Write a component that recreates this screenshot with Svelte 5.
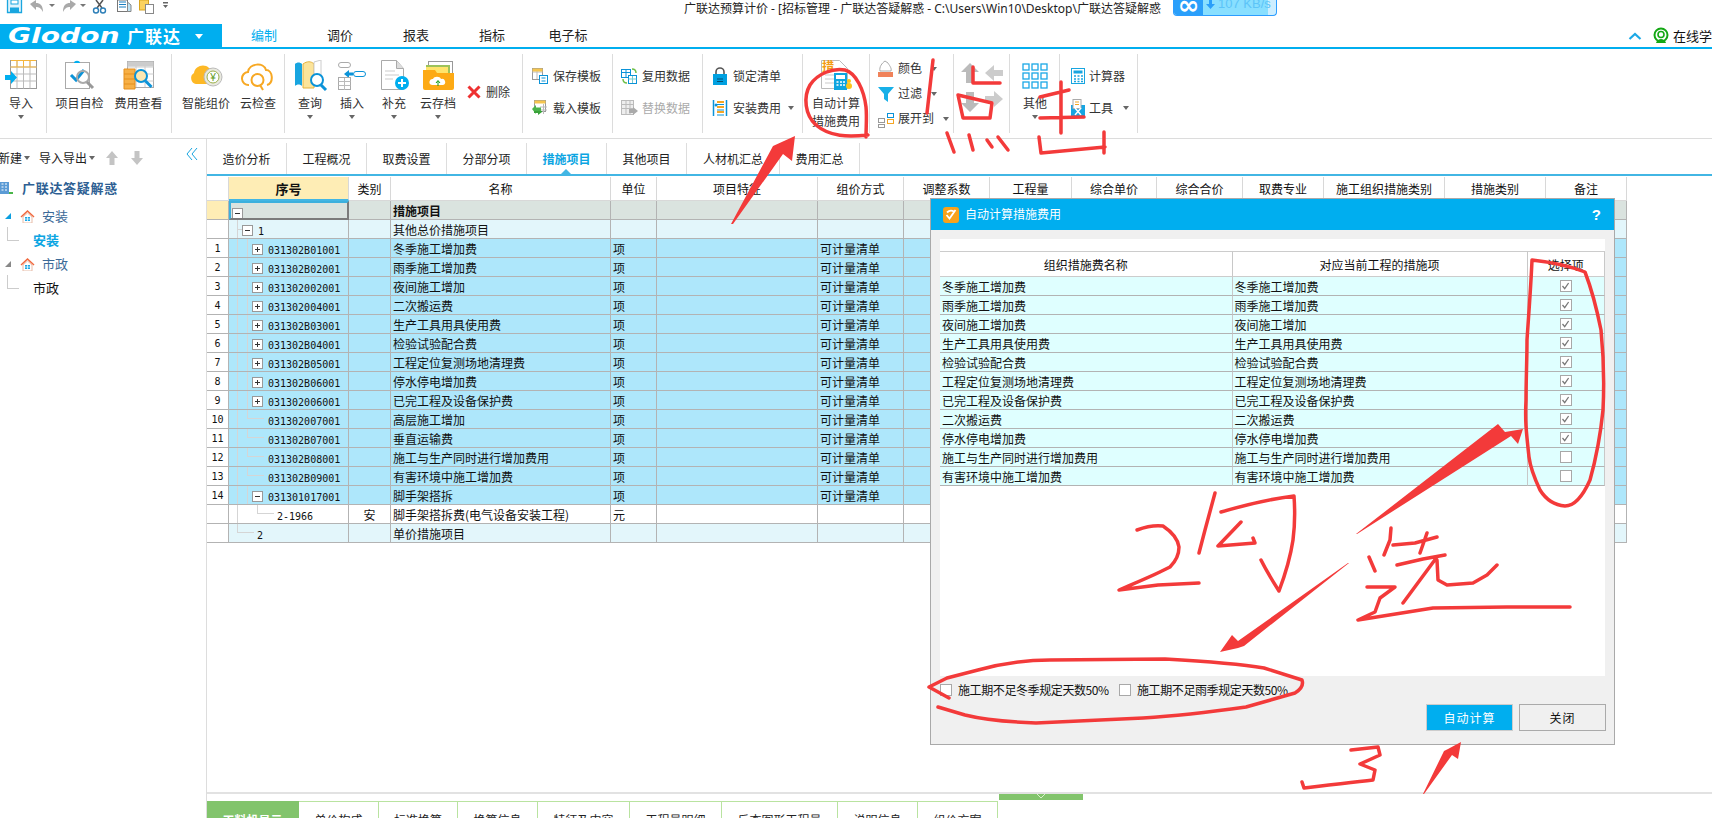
<script>
  const cols = ['序号','类别','名称','单位','项目特征','组价方式','调整系数','工程量','综合单价','综合合价','取费专业','施工组织措施类别','措施类别','备注'];
  const items = [
    ['031302B01001','冬季施工增加费','plus'],['031302B02001','雨季施工增加费','plus'],['031302002001','夜间施工增加','plus'],
    ['031302004001','二次搬运费','plus'],['031302B03001','生产工具用具使用费','plus'],['031302B04001','检验试验配合费','plus'],
    ['031302B05001','工程定位复测场地清理费','plus'],['031302B06001','停水停电增加费','plus'],['031302006001','已完工程及设备保护费','plus'],
    ['031302007001','高层施工增加',''],['031302B07001','垂直运输费',''],['031302B08001','施工与生产同时进行增加费用',''],
    ['031302B09001','有害环境中施工增加费',''],['031301017001','脚手架搭拆','minus']
  ];
  const dlg = [
    ['冬季施工增加费','冬季施工增加费',1],['雨季施工增加费','雨季施工增加费',1],['夜间施工增加费','夜间施工增加',1],
    ['生产工具用具使用费','生产工具用具使用费',1],['检验试验配合费','检验试验配合费',1],['工程定位复测场地清理费','工程定位复测场地清理费',1],
    ['已完工程及设备保护费','已完工程及设备保护费',1],['二次搬运费','二次搬运费',1],['停水停电增加费','停水停电增加费',1],
    ['施工与生产同时进行增加费用','施工与生产同时进行增加费用',0],['有害环境中施工增加费','有害环境中施工增加费',0]
  ];
  const topTabs = ['编制','调价','报表','指标','电子标'];
  const subTabs = ['造价分析','工程概况','取费设置','分部分项','措施项目','其他项目','人材机汇总','费用汇总'];
  const botTabs = ['工料机显示','单价构成','标准换算','换算信息','特征及内容','工程量明细','反查图形工程量','说明信息','组价方案'];
</script>

{#snippet caret()}<span class="caret"></span>{/snippet}
{#snippet box(kind)}<span class="box"><i></i>{#if kind === 'plus'}<b></b>{/if}</span>{/snippet}
{#snippet check(on)}<span class="cb">{#if on}<svg width="11" height="12" viewBox="0 0 11 12"><path d="M2.5 6l2.2 2.6L8.6 3" fill="none" stroke="#777" stroke-width="1.3"/></svg>{/if}</span>{/snippet}

<div class="app">
  <header class="title">
    <div class="quick">
      <svg width="170" height="14" viewBox="0 0 170 14">
        <path d="M7.500 0v12.500h14V0" fill="#dff3fc" stroke="#1aa6df" stroke-width="1.300"/><rect x="10" y="7.500" width="9" height="5" fill="#1aa6df"/><rect x="11" y="0" width="7" height="4" fill="#fff" stroke="#1aa6df"/>
        <path d="M30 4l6-4v3c4 0 7 2 7 9-2-4-4-5-7-5v3z" fill="#a9a9a9"/><path d="M49 4h6l-3 3z" fill="#777"/>
        <path d="M76 4l-6-4v3c-4 0-7 2-7 9 2-4 4-5 7-5v3z" fill="#a9a9a9"/><path d="M80 4h6l-3 3z" fill="#777"/>
        <path d="M96 0l6 8M103 0l-6 8" stroke="#555" stroke-width="1.500"/><circle cx="96" cy="10.500" r="2.500" fill="none" stroke="#2d7fb8" stroke-width="1.400"/><circle cx="103" cy="10.500" r="2.500" fill="none" stroke="#2d7fb8" stroke-width="1.400"/>
        <rect x="117.500" y="0" width="10" height="11.500" fill="#fff" stroke="#777"/><path d="M119 2h7M119 4.500h7M119 7h7" stroke="#1a7fc0"/><path d="M127.500 2l3.500 3v6.500h-3.500z" fill="#bfe4f5" stroke="#888"/>
        <rect x="139.500" y="0" width="9" height="10" fill="#fbd25f" stroke="#d9a520"/><rect x="145.500" y="4.500" width="8" height="9" fill="#fff" stroke="#888"/>
        <path d="M163 2h5v1.500h-5zM163 5h5l-2.500 3z" fill="#666"/>
      </svg>
    </div>
    <div class="wintitle">广联达预算计价 - [招标管理 - 广联达答疑解惑 - C:\Users\Win10\Desktop\广联达答疑解惑</div>
    <div class="speed">
      <span class="inf">∞</span>
      <span class="rate"><svg width="9" height="9" viewBox="0 0 9 9"><path d="M3 0h3v4h3L4.500 9 0 4h3z" fill="#2a9ffa"/></svg>107 KB/s</span>
    </div>
  </header>

  <nav class="tabbar">
    <div class="logo"><span class="gl">Glodon</span><span class="cn">广联达</span><span class="lcaret"></span></div>
    {#each topTabs as t, i}
      <div class="ttab" class:on={i === 0}>{t}</div>
    {/each}
    <div class="tright">
      <svg width="14" height="8" viewBox="0 0 14 8"><path d="M1.500 7L7 2l5.500 5" fill="none" stroke="#1ba8e6" stroke-width="2.200"/></svg>
      <svg class="agent" width="18" height="18" viewBox="0 0 18 18"><circle cx="9" cy="8" r="6.500" fill="none" stroke="#14a814" stroke-width="2"/><circle cx="9" cy="7.500" r="3" fill="none" stroke="#14a814" stroke-width="1.600"/><path d="M4 16c1-3 3-4 5-4s4 1 5 4z" fill="#14a814"/></svg>
      <span>在线学</span>
    </div>
  </nav>

  <section class="ribbon">
    <div class="grp g1">
      <div class="lg"><svg width="36" height="32" viewBox="0 0 36 32">
        <rect x="7.500" y="0.500" width="26" height="28" fill="#fff" stroke="#999"/>
        <path d="M7.500 7h26M7.500 14h26M7.500 21h26M14 .5v28M20.500 .5v28M27 .5v28" stroke="#bbb"/><path d="M7.500 7h26M14 .5v6.500M20.500 .5v6.500M27 .5v6.500M8 .5h25" stroke="#f5b53c" fill="none"/>
        <path d="M2 15h6v-4l6 6.500-6 6.500v-4H2z" fill="#00aeef"/></svg>
        <span class="lb">导入</span>{@render caret()}</div>
    </div>
    <div class="grp g2">
      <div class="lg"><svg width="36" height="32" viewBox="0 0 36 32">
        <rect x="3.500" y="2.500" width="24" height="26" fill="#fff" stroke="#aaa"/><path d="M12 3c0-3 6-3 6 0z" fill="#00aeef"/>
        <path d="M9 15l5 5 8-10" fill="none" stroke="#0b93d8" stroke-width="3"/><circle cx="21" cy="17" r="6" fill="none" stroke="#aaa" stroke-width="2"/><path d="M25 22l6 6" stroke="#999" stroke-width="3"/></svg>
        <span class="lb">项目自检</span></div>
      <div class="lg"><svg width="36" height="32" viewBox="0 0 36 32">
        <rect x="6.500" y="1.500" width="26" height="26" fill="#fff" stroke="#aaa"/><path d="M6.500 7h26M6.500 14h26M6.500 21h26M15 2v25M24 2v25" stroke="#ccc"/><rect x="6.500" y="1.500" width="26" height="5" fill="#ccc"/>
        <path d="M3 9h11v20H3z" fill="#f7b046" stroke="#e58f1d"/><path d="M3 14h11M3 19h11M3 24h11" stroke="#e58f1d"/>
        <circle cx="20" cy="16" r="6" fill="#fce8b2" stroke="#0b93d8" stroke-width="2"/><path d="M24.500 21l6 6" stroke="#0b93d8" stroke-width="3"/></svg>
        <span class="lb">费用查看</span></div>
    </div>
    <div class="grp g3">
      <div class="lg"><svg width="36" height="32" viewBox="0 0 36 32">
        <path d="M8 24a6 6 0 0 1-2-11c1-7 10-10 15-5 3 0 4 1 5 3v13z" fill="#fdb825"/>
        <circle cx="25" cy="17" r="9" fill="#e9e9df" stroke="#bbb"/><circle cx="25" cy="17" r="6" fill="#fff" stroke="#9ab04a"/><text x="25" y="21" text-anchor="middle" font-size="10" fill="#5c9a1a" font-family="Liberation Sans">¥</text></svg>
        <span class="lb">智能组价</span></div>
      <div class="lg"><svg width="36" height="32" viewBox="0 0 36 32">
        <path d="M9 25a6.500 6.500 0 0 1-1-13C9 3 24 2 26 10c7 0 8 13 1 15" fill="none" stroke="#f7a823" stroke-width="2"/>
        <circle cx="17.500" cy="20" r="6" fill="none" stroke="#f7a823" stroke-width="2"/><path d="M20 25l3 5" stroke="#f7a823" stroke-width="2"/></svg>
        <span class="lb">云检查</span></div>
    </div>
    <div class="grp g4">
      <div class="lg"><svg width="36" height="32" viewBox="0 0 36 32">
        <path d="M3 4c2-2 5-2 7 0v22c-2-2-5-2-7 0z" fill="#18a5e0"/><path d="M11 4c4-3 8-3 11 0v24H11z" fill="#fce49a" stroke="#e6b33d"/><path d="M22 2l7-2v20l-7 6z" fill="#fff" stroke="#ccc"/>
        <circle cx="25" cy="20" r="6" fill="#fff" stroke="#0b93d8" stroke-width="2"/><path d="M29 25l5 5" stroke="#0b93d8" stroke-width="3"/></svg>
        <span class="lb">查询</span>{@render caret()}</div>
      <div class="lg"><svg width="36" height="32" viewBox="0 0 36 32">
        <rect x="4.500" y="2.500" width="12" height="5" rx="2.500" fill="#fff" stroke="#aaa"/><rect x="19.500" y="11.500" width="12" height="5" rx="2.500" fill="#fff" stroke="#0b93d8"/>
        <path d="M10 14l5-4v2.500h4v3h-4V18z" fill="#0b93d8"/><rect x="4.500" y="17.500" width="12" height="12" fill="#fff" stroke="#aaa"/><path d="M4.500 21.500h12M4.500 25.500h12M10.500 18v12" stroke="#bbb"/></svg>
        <span class="lb">插入</span>{@render caret()}</div>
      <div class="lg"><svg width="36" height="32" viewBox="0 0 36 32">
        <path d="M5.500 .5h15l7 8v21h-22z" fill="#fff" stroke="#aaa"/><path d="M20.500 .5v8h7" fill="#ddd" stroke="#aaa"/><path d="M9 11h10M9 15h14M9 19h8" stroke="#ddd" stroke-width="1.500"/>
        <circle cx="26" cy="23" r="7" fill="#00aeef"/><path d="M26 19v8M22 23h8" stroke="#fff" stroke-width="2"/></svg>
        <span class="lb">补充</span>{@render caret()}</div>
      <div class="lg wide"><svg width="36" height="32" viewBox="0 0 36 32">
        <rect x="8.500" y="1.500" width="24" height="18" fill="#fff" stroke="#999"/><rect x="6" y="5" width="24" height="16" fill="#9cc25a"/><rect x="6" y="7" width="22" height="14" fill="#ffe46b"/>
        <path d="M3 10h12l2 3h17v15a2 2 0 0 1-2 2H5a2 2 0 0 1-2-2z" fill="#fdaa15"/><path d="M12 25a3 3 0 0 1 1-6c1-3 7-3 8 0a3 3 0 0 1 2 6z" fill="#fff"/><path d="M18 26v-5M16 23l2-2.500 2 2.500" fill="none" stroke="#149c14"/></svg>
        <span class="lb">云存档</span>{@render caret()}</div>
      <div class="sm del"><svg width="14" height="14" viewBox="0 0 14 14"><path d="M1.500 1.500l11 11M12.500 1.500l-11 11" stroke="#ee3131" stroke-width="3"/></svg><span>删除</span></div>
    </div>
    <div class="grp g5 stack">
      <div class="sm"><svg width="18" height="18" viewBox="0 0 18 18"><rect x="1.500" y="1.500" width="10" height="11" fill="#fff" stroke="#999"/><path d="M1.500 5h10M6 2v10" stroke="#bbb"/><rect x="1.500" y="1.500" width="10" height="3" fill="#f5c54f"/><rect x="8.500" y="8.500" width="8" height="8" fill="#fff" stroke="#0b93d8"/><path d="M10.500 11h4M10.500 14h4" stroke="#0b93d8"/></svg><span>保存模板</span></div>
      <div class="sm"><svg width="18" height="18" viewBox="0 0 18 18"><rect x="3.500" y="1.500" width="11" height="11" fill="#fff" stroke="#999"/><rect x="3.500" y="1.500" width="11" height="3" fill="#f5c54f"/><path d="M9 8h7M9 11h7M12.500 5v10" stroke="#bbb"/><path d="M1 10l4-4v2.500h5v4H5V15z" fill="#4bb34b"/><path d="M11 13l-4 3v-2H3v-2h8z" fill="#3aa23a"/></svg><span>载入模板</span></div>
    </div>
    <div class="grp g6 stack">
      <div class="sm"><svg width="18" height="18" viewBox="0 0 18 18"><rect x="1.500" y="2.500" width="9" height="8" fill="#fff" stroke="#0b93d8"/><path d="M1.500 5.500h9M6 3v7" stroke="#0b93d8"/><rect x="8.500" y="8.500" width="8" height="8" fill="#fff" stroke="#0b93d8"/><path d="M8.500 12h8M12.500 9v7" stroke="#7cc"/><path d="M12 2c3 0 4 1 4 4M3 12c0 3 1 4 4 4" fill="none" stroke="#6fbf4a" stroke-width="1.500"/></svg><span>复用数据</span></div>
      <div class="sm off"><svg width="18" height="18" viewBox="0 0 18 18"><rect x="1.500" y="1.500" width="12" height="14" fill="#eee" stroke="#bbb"/><path d="M1.500 5.500h12M1.500 9.500h12M6 2v13M10 2v13" stroke="#bbb"/><path d="M9 10h4V8l5 4-5 4v-2H9z" fill="#aaa"/></svg><span>替换数据</span></div>
    </div>
    <div class="grp g7 stack">
      <div class="sm"><svg width="16" height="18" viewBox="0 0 16 18"><path d="M4 8V5a4 4 0 0 1 8 0v3" fill="none" stroke="#555" stroke-width="1.600"/><rect x="1" y="7" width="14" height="11" fill="#00a0e0"/><path d="M5 12h6M5 14.500h6" stroke="#044f74"/></svg><span>锁定清单</span></div>
      <div class="sm"><svg width="16" height="18" viewBox="0 0 16 18"><path d="M1.500 1v16M14.500 1v16" stroke="#0b93d8" stroke-width="1.500"/><path d="M5 3h7M5 8h7M5 13h7" stroke="#f5a623" stroke-width="2"/><circle cx="4" cy="6" r="1.500" fill="#0b93d8"/><path d="M5 5.500h7M5 11h7M5 16h7" stroke="#0b93d8"/></svg><span>安装费用</span>{@render caret()}</div>
    </div>
    <div class="grp g8">
      <div class="lg"><svg width="36" height="32" viewBox="0 0 36 32">
        <path d="M3.500 .5h18l8 8v20h-26z" fill="#fff" stroke="#bbb"/><path d="M7 15h12M7 19h12M7 23h12" stroke="#ddd" stroke-width="1.500"/>
        <text x="4" y="11" font-size="12" font-weight="700" fill="#f39c12" font-family="Noto Sans CJK SC">措</text>
        <rect x="16" y="13" width="13" height="17" fill="#0ea5e0"/><rect x="18" y="15" width="9" height="4" fill="#fff"/><path d="M18.500 22h2M22 22h2M25 22h2M18.500 25h2M22 25h2M25 25h2" stroke="#fff" stroke-width="1.600"/>
        <circle cx="31" cy="26" r="3" fill="#fcc419"/><circle cx="31" cy="21" r="2" fill="#fcc419"/></svg>
        <span class="lb two">自动计算<br/>措施费用</span></div>
    </div>
    <div class="grp g9 stack">
      <div class="sm"><svg width="18" height="18" viewBox="0 0 18 18"><path d="M8 1c-3 2-6 6-5 10h11c1-3-2-6-3-8z" fill="#fff" stroke="#aaa"/><rect x="1" y="12" width="15" height="5" fill="#f0825a"/></svg><span>颜色</span>{@render caret()}</div>
      <div class="sm"><svg width="18" height="18" viewBox="0 0 18 18"><path d="M1 2h16l-6 7v8l-4-3V9z" fill="#18b0e8"/></svg><span>过滤</span>{@render caret()}</div>
      <div class="sm"><svg width="18" height="18" viewBox="0 0 18 18"><rect x="1.500" y="8.500" width="6" height="4" fill="#fff" stroke="#999"/><rect x="10.500" y="3.500" width="6" height="4" fill="#fff" stroke="#0b93d8"/><rect x="10.500" y="9.500" width="6" height="4" fill="#fff" stroke="#f5a623"/><rect x="1.500" y="14.500" width="6" height="3" fill="#fff" stroke="#999"/></svg><span>展开到</span>{@render caret()}</div>
    </div>
    <div class="grp g10">
      <svg width="44" height="60" viewBox="0 0 44 60"><path d="M9 1L0 10h5v11h8V10h5z" fill="#bbb"/><path d="M24 11l9-8v5h9v6h-9v5z" fill="#ccc"/><path d="M9 50L0 41h5V30h8v11h5z" fill="#bbb"/><path d="M42 37l-9-8v5h-9v6h9v5z" fill="#ccc"/></svg>
    </div>
    <div class="grp g11">
      <div class="lg"><svg class="nine" width="26" height="26" viewBox="0 0 26 26"><g fill="#fff" stroke="#1ba8e6" stroke-width="1.300"><rect x="1" y="1" width="6" height="6"/><rect x="10" y="1" width="6" height="6"/><rect x="19" y="1" width="6" height="6"/><rect x="1" y="10" width="6" height="6"/><rect x="10" y="10" width="6" height="6"/><rect x="19" y="10" width="6" height="6"/><rect x="1" y="19" width="6" height="6"/><rect x="10" y="19" width="6" height="6"/><rect x="19" y="19" width="6" height="6"/></g></svg>
        <span class="lb">其他</span>{@render caret()}</div>
    </div>
    <div class="grp g12 stack">
      <div class="sm"><svg width="14" height="18" viewBox="0 0 14 18"><rect x=".5" y="1.500" width="13" height="15" fill="#fff" stroke="#18a5e0"/><rect x="2.500" y="3.500" width="9" height="3" fill="#18a5e0"/><path d="M3 9h2M6.500 9h2M10 9h2M3 12h2M6.500 12h2M10 12h2M3 14.500h2M6.500 14.500h2M10 14.500h2" stroke="#18a5e0" stroke-width="1.300"/></svg><span>计算器</span></div>
      <div class="sm"><svg width="14" height="18" viewBox="0 0 14 18"><rect y="6" width="14" height="12" fill="#17a5e2"/><rect x="2" y="0.500" width="8" height="9" fill="#fff" stroke="#aaa"/><path d="M4 3h4M4 5.500h4" stroke="#f5a623"/><path d="M4 9l6 7M10 9l-6 7" stroke="#fff" stroke-width="1.500"/></svg><span>工具</span>{@render caret()}</div>
    </div>
  </section>

  <div class="body">
    <aside class="side">
      <div class="sidebar-tools">
        <span class="nw">新建</span>{@render caret()}<span class="ie">导入导出</span>{@render caret()}
        <svg class="arrows" width="40" height="14" viewBox="0 0 40 14"><path d="M6 0L0 7h3.500v7h5V7H12zM31 14l-6-7h3.500V0h5v7H37z" fill="#c4c4c4"/></svg>
        <svg class="coll" width="12" height="14" viewBox="0 0 12 14"><path d="M6 1L1 7l5 6M11 1L6 7l5 6" fill="none" stroke="#18a5e0"/></svg>
      </div>
      <div class="root">
        <svg width="14" height="14" viewBox="0 0 14 14"><path d="M1 13V1h9v12z" fill="#5b9bd5"/><path d="M2.500 3h2M6 3h2M2.500 6h2M6 6h2M2.500 9h2M6 9h2" stroke="#fff"/><rect x="10" y="11" width="4" height="2" fill="#49b649"/></svg>
        <span>广联达答疑解惑</span>
      </div>
      {#each [['安装', true], ['市政', false]] as [n, sel]}
        <div class="node"><span class="tri" class:sel></span>
          <svg width="15" height="14" viewBox="0 0 15 14"><path d="M7.500 1L0.500 7.500l1 1L7.500 3l6 5.500 1-1z" fill="#f0683e"/><path d="M3 8l4.500-4L12 8v6H3z" fill="#fff" stroke="#e7bca8"/><rect x="5" y="8" width="5" height="4" fill="#1ba8e6"/><path d="M7.500 8v4M5 10h5" stroke="#fff" stroke-width=".7"/></svg>
          <span>{n}</span></div>
        <div class="leaf" class:sel>{n}</div>
      {/each}
    </aside>
    <main class="main">
      <div class="subtabs">
        {#each subTabs as t, i}
          <div class="stab" class:on={i === 4} class:w93={i === 6}>{t}</div>
        {/each}
      </div>
      <div class="grid">
        <div class="row head">
          <div class="c idx"></div>
          {#each cols as c, i}<div class="c" class:seq={i === 0}>{c}</div>{/each}
        </div>
        <div class="row r0">
          <div class="c idx"></div>
          <div class="c sel0 lv0">{@render box('minus')}</div>
          <div class="c"></div><div class="c nm bold">措施项目</div>
          {#each Array(11).fill(0) as _}<div class="c"></div>{/each}
        </div>
        <div class="row r1">
          <div class="c idx"></div>
          <div class="c lv1 tl">{@render box('minus')}<span class="code">1</span></div>
          <div class="c"></div><div class="c nm">其他总价措施项目</div>
          {#each Array(11).fill(0) as _}<div class="c"></div>{/each}
        </div>
        {#each items as it, i}
          <div class="row item">
            <div class="c idx num">{i + 1}</div>
            <div class="c lv2 tl tl2" class:tree={!it[2]}>
              {#if it[2]}{@render box(it[2])}{/if}<span class="code">{it[0]}</span>
            </div>
            <div class="c"></div>
            <div class="c nm">{it[1]}</div>
            <div class="c nm">项</div>
            <div class="c"></div>
            <div class="c nm">可计量清单</div>
            {#each Array(8).fill(0) as _}<div class="c"></div>{/each}
          </div>
        {/each}
        <div class="row plain">
          <div class="c idx"></div>
          <div class="c lv3 tl3 tl"><span class="code">2-1966</span></div>
          <div class="c mid">安</div>
          <div class="c nm">脚手架搭拆费(电气设备安装工程)</div>
          <div class="c nm">元</div>
          {#each Array(10).fill(0) as _}<div class="c"></div>{/each}
        </div>
        <div class="row r1">
          <div class="c idx"></div>
          <div class="c lv1b tl4"><span class="code">2</span></div>
          <div class="c"></div><div class="c nm">单价措施项目</div>
          {#each Array(11).fill(0) as _}<div class="c"></div>{/each}
        </div>
      </div>
      <div class="spacer"></div>
      <div class="botline"><div class="handle"><svg width="10" height="6" viewBox="0 0 10 6"><path d="M1 0l4 4 4-4" fill="none" stroke="#d9f0cc"/></svg></div></div>
      <div class="bottabs">
        {#each botTabs as t, i}<div class="btab b{i}" class:on={i === 0}>{t}</div>{/each}
      </div>
    </main>
  </div>

  <div class="dialog">
    <div class="dhead">
      <svg width="16" height="16" viewBox="0 0 16 16"><rect width="16" height="16" rx="3" fill="#f7a21b"/><path d="M3.500 8l3 3.500L12.500 3M4 5.500c2-2 5-2 7-1" fill="none" stroke="#fff" stroke-width="1.800"/></svg>
      <span class="dtitle">自动计算措施费用</span>
      <b class="q">?</b>
    </div>
    <div class="panel">
      <div class="drow dh"><div class="dc">组织措施费名称</div><div class="dc">对应当前工程的措施项</div><div class="dc">选择项</div></div>
      {#each dlg as d}
        <div class="drow dd"><div class="dc">{d[0]}</div><div class="dc">{d[1]}</div><div class="dc ctr">{@render check(d[2])}</div></div>
      {/each}
    </div>
    <div class="opts">
      {@render check(0)}<span class="o1">施工期不足冬季规定天数50%</span>
      {@render check(0)}<span class="o2">施工期不足雨季规定天数50%</span>
    </div>
    <div class="btns">
      <div class="btn pri">自动计算</div><div class="btn">关闭</div>
    </div>
  </div>

  <svg class="ink" width="1712" height="818" viewBox="0 0 1712 818">
    <g fill="none" stroke="#f33a3a" stroke-width="3.500" stroke-linecap="round" stroke-linejoin="round">
      <path d="M868 135C848 137 830 137 816 125C805 115 803 97 810 85C818 73 833 68 845 70C856 73 864 90 866 107C867 117 866 128 866 137"/>
      <path d="M933 60L927 113"/>
      <path d="M973 67V83H1000M958 95L963 118H990L992 103L958 95M947 133L954 152M969 135L973 150M987 140L992 147M998 137L1008 150"/>
      <path d="M1040 97L1069 90M1061 82V133M1040 118L1084 117M1039 137L1041 153L1105 147M1104 132V153"/>
      <path d="M1532 260C1550 262 1570 266 1585 272C1590 285 1597 310 1601 330C1604 360 1604 390 1603 410C1601 430 1597 455 1590 480C1582 498 1574 506 1565 506C1552 505 1545 498 1540 490C1533 475 1530 465 1529 457C1526 430 1525 420 1526 400C1526 380 1527 360 1527 340C1529 310 1531 285 1532 260"/>
      <path d="M1137 530C1145 527 1155 525 1163 526C1172 532 1178 540 1179 547C1179 555 1175 562 1170 567C1155 575 1135 583 1119 590L1158 585L1199 583"/>
      <path d="M1215 493L1205 530L1199 553M1221 512C1245 505 1270 499 1294 496C1295 510 1295 525 1293 540C1290 560 1285 575 1279 591C1272 580 1266 570 1261 560M1241 522L1218 546L1255 543L1253 538"/>
      <path d="M1391 528L1390 540L1384 555M1393 545L1415 543L1437 537M1427 533L1420 553M1397 565L1423 559L1445 555M1437 557L1403 603M1437 560L1438 580L1447 585L1473 583L1487 575L1497 565M1369 557L1375 571M1367 587L1395 587L1380 598L1375 612L1358 620L1433 608L1507 607L1570 607"/>
      <path d="M949 698L929 687L947 678L978 670C1000 664 1025 660 1050 660L1165 659C1200 661 1240 664 1264 668L1302 680C1304 686 1300 690 1295 693L1246 707C1210 712 1175 716 1143 718L1036 723C1010 722 985 720 965 715L938 707"/>
      <path d="M1351 750L1378 747L1380 755L1360 764L1375 770L1373 780C1350 783 1325 785 1304 788L1302 782"/>
    </g>
    <g fill="#f33a3a">
      <polygon points="795,136 792,161 783,154 733,224 731,224 773,146"/>
      <polygon points="1523,429 1518,444 1511,436 1357,534 1356,534 1498,424 1505,432"/>
      <polygon points="1220,652 1232,635 1238,641 1348,563 1349,563 1244,646 1238,648"/>
      <polygon points="1461,742 1458,759 1452,755 1424,794 1423,794 1444,751 1448,749"/>
    </g>
  </svg>
</div>

<style>
  :global(body){margin:0;overflow:hidden;background:#fff}
  .app{position:relative;width:1712px;height:818px;overflow:hidden;display:flex;flex-direction:column;background:#fff;
    font:12px/1.2 "Noto Sans CJK SC","Liberation Sans",sans-serif;color:#222}
  .title{height:24px;flex:none;display:flex;position:relative;overflow:hidden}
  .quick{width:684px;flex:none;height:14px}
  .wintitle{white-space:nowrap;font-size:12px;line-height:17px;color:#222;font-family:"Noto Sans","Noto Sans CJK SC",sans-serif}
  .speed{position:absolute;left:1173px;top:0;width:104px;height:16px;display:flex;border:1px solid #2c9dff;border-top:0;border-radius:0 0 4px 4px;box-sizing:border-box;overflow:hidden;background:#cdeeff}
  .inf{width:29px;flex:none;background:#2a9ffa;color:#fff;font:bold 26px/10px "DejaVu Sans",sans-serif;text-align:center}
  .rate{width:65px;flex:none;background:#88dfff;color:#5cc4f8;font:13px/7px "Liberation Sans",sans-serif;padding-left:3px;box-sizing:border-box;white-space:nowrap;display:flex;gap:3px;align-items:flex-start}
  .rate svg{flex:none}

  .tabbar{height:25px;flex:none;display:flex;box-sizing:border-box;border-bottom:2px solid #00aeef}
  .logo{width:222px;flex:none;margin-right:4px;background:#00aeef;color:#fff;display:flex;align-items:center;padding-left:8px;box-sizing:border-box;height:23px;position:relative}
  .gl{display:inline-block;font:italic bold 22px/23px "DejaVu Sans",sans-serif;width:119px;flex:none;transform:scaleX(1.28);transform-origin:left center}
  .cn{font:bold 17px/23px "Noto Sans CJK SC",sans-serif;letter-spacing:1px;flex:none}
  .lcaret{margin-left:14px;border:4px solid transparent;border-top:5px solid #fff;margin-top:5px}
  .ttab{width:76px;text-align:center;font-size:13px;line-height:22px;color:#222;box-sizing:border-box;height:23px}
  .ttab.on{color:#00aeef;border-bottom:2px solid #00aeef;height:25px}
  .tright{margin-left:auto;display:flex;align-items:center;font-size:13px;color:#111;white-space:nowrap;width:84px;height:23px}
  .tright svg:first-child{margin-right:10px;flex:none}
  .agent{margin-right:3px;flex:none}

  .ribbon{height:90px;flex:none;display:flex;box-sizing:border-box;border-bottom:1px solid #dcdcdc;padding-top:5px}
  .grp{height:79px;box-sizing:border-box;border-right:1px solid #dcdcdc;display:flex;padding-top:6px;flex:none}
  .g1{width:47px}.g2{width:125px;padding-left:3px}.g3{width:113px;padding-left:8px}.g4{width:238px;padding-left:4px}
  .g5{width:90px;padding-left:8px}.g6{width:90px;padding-left:7px}.g7{width:100px;padding-left:9px}
  .g8{width:67px}.g9{width:84px;padding:2px 0 0 7px}.g10{width:56px;padding:8px 0 0 7px}.g11{width:50px}.g12{width:78px;padding-left:11px}
  .lg{display:flex;flex-direction:column;align-items:center;width:42px;flex:none;color:#333;position:relative}
  .g2 .lg{width:59px}.g3 .lg{width:52px}.g8 .lg{width:66px}.g1 .lg{width:42px}.g11 .lg{width:50px}
  .lg.wide{width:46px}
  .lg svg{flex:none;height:32px}
  .lg svg.nine{height:26px;margin:3px 0}
  .lb{line-height:20px;height:20px;white-space:nowrap;margin-top:1px}
  .lb.two{line-height:18px;height:36px;text-align:center;margin-top:2px}
  .caret{display:inline-block;width:0;height:0;border:3.500px solid transparent;border-top:4px solid #666;border-bottom:0;vertical-align:middle}
  .lg .caret{margin-top:2px}
  .stack{flex-direction:column}
  .sm{height:32px;display:flex;align-items:center;gap:3px;color:#333;white-space:nowrap;flex:none}
  .sm .caret{margin-left:6px}
  .g9 .sm{height:25px;gap:3px}
  .g12 .sm{gap:4px}
  .g5 .sm,.g6 .sm,.g7 .sm{gap:4px}
  .g7 .sm svg{margin-right:1px}
  .g7 .sm .caret{margin-left:3px}
  .del{margin:20px 0 0 6px;height:24px;gap:5px}
  .off{color:#aaa}

  .body{flex:1;display:flex;min-height:0}
  .side{width:207px;flex:none;box-sizing:border-box;border-right:1px solid #ddd;position:relative}
  .sidebar-tools{height:37px;display:flex;align-items:center;padding-top:1px;white-space:nowrap;position:relative;box-sizing:border-box}
  .nw{margin-left:-2px;margin-right:2px}
  .ie{margin:0 2px 0 9px}
  .arrows{margin-left:11px}
  .coll{position:absolute;left:186px;top:8px}
  .root{display:flex;align-items:center;height:24px;margin-bottom:4px;gap:9px;color:#2e5f93;font:bold 13px/24px "Noto Sans CJK SC",sans-serif;letter-spacing:.7px}
  .root svg{flex:none;margin-left:-1px}
  .node{height:24px;display:flex;align-items:center;color:#3c6a98;font-size:13px;padding-left:5px;box-sizing:border-box}
  .node svg{margin:0 7px 0 9px}
  .tri{width:0;height:0;border-style:solid;border-width:0 0 6px 6px;border-color:transparent transparent #888 transparent}
  .tri.sel{border-color:transparent transparent #0b9fe0 transparent}
  .leaf{height:24px;line-height:24px;padding-left:33px;font-size:13px;position:relative;color:#111}
  .leaf.sel{color:#0ba5e2;font-weight:700}
  .leaf::before{content:"";position:absolute;left:7px;top:-1px;height:13px;width:11px;border-left:1px solid #ccc;border-bottom:1px solid #ccc}

  .main{flex:1;min-width:0;display:flex;flex-direction:column;position:relative}
  .subtabs{height:37px;flex:none;box-sizing:border-box;padding-top:4px;border-bottom:2px solid #42b6e4;display:flex}
  .stab{width:80px;box-sizing:border-box;border-right:1px solid #ddd;text-align:center;line-height:31px;position:relative;color:#222}
  .stab.w93{width:93px}
  .stab.on{color:#0ba5e2;font-weight:700}
  .stab.on::after{content:"";position:absolute;left:34px;bottom:0;border:5px solid transparent;border-bottom-color:#42b6e4;border-top:0}
  .grid{margin-top:1px;flex:none;width:1420px}
  .row{display:grid;grid-template-columns:22px 120px 42px 220px 46px 161px 86px 86px 82px 85px 86px 81px 121px 101px 81px;grid-template-rows:minmax(0,1fr);height:19px}
  .c{box-sizing:border-box;border-right:1px solid #b3b3b3;border-bottom:1px solid #b3b3b3;line-height:19px;white-space:nowrap;overflow:hidden;position:relative;color:#111}
  .head{height:24px}
  .head .c{border-color:#d8d8d8;text-align:center;line-height:23px;background:#fff}
  .head .seq{background:#feedb5;font-weight:700;font-size:13px;border-bottom:2px solid #42b6e4}
  .idx{background:#fff;text-align:center}
  .num{font-family:"DejaVu Sans Mono",monospace;font-size:10px}
  .nm{padding-left:2px}
  .bold{font-weight:700}
  .mid{text-align:center}
  .r0 .c{background:#dae3df}
  .r0 .idx{background:#feedb5}
  .r1 .c{background:#e3f6fb}
  .r1 .idx{background:#fff}
  .item .c{background:#aee7fb}
  .item .idx{background:#fff}
  .plain .c{background:#fff}
  .r0 .sel0{border:2px solid #7b7b7b;border-left-color:#3cb0dd;border-top-color:#3cb0dd;padding-left:1px}
  .box{display:inline-block;width:11px;height:11px;border:1px solid #999;background:#fff;position:relative;box-sizing:border-box;vertical-align:middle;margin-top:-3px;flex:none}
  .box i{position:absolute;left:2px;right:2px;top:4px;height:1px;background:#333}
  .box b{position:absolute;top:2px;bottom:2px;left:4px;width:1px;background:#333}
  .code{font:10px/18px "DejaVu Sans Mono",monospace;margin-left:5px;color:#111}
  .lv0{padding-left:3px}
  .lv1{padding-left:13px}
  .lv2{padding-left:23px}
  .lv2.tree{padding-left:39px}
  .lv2.tree .code{margin-left:0}
  .lv3{padding-left:48px}
  .lv3 .code{margin-left:0}
  .lv1b{padding-left:28px}
  .lv1b .code{margin-left:0}
  .tl::before,.tl4::before{content:"";position:absolute;left:8px;top:-1px;bottom:0;width:1px;background:#d5d5d5}
  .lv1.tl::after{content:"";position:absolute;left:9px;top:9px;width:4px;height:1px;background:#d5d5d5}
  .tl2::after{content:"";position:absolute;left:18px;top:-1px;bottom:0;width:1px;background:#d5d5d5}
  .tree::after{width:17px;height:10px;background:none;border-left:1px solid #d5d5d5;border-bottom:1px solid #d5d5d5;bottom:auto;box-sizing:border-box}
  .tl3::after{content:"";position:absolute;left:28px;top:-1px;width:17px;height:10px;border-left:1px solid #d5d5d5;border-bottom:1px solid #d5d5d5;box-sizing:border-box}
  .tl4::before{bottom:auto;height:10px;width:17px;background:none;border-left:1px solid #d5d5d5;border-bottom:1px solid #d5d5d5;box-sizing:border-box}

  .spacer{flex:1}
  .botline{flex:none;height:9px;border-top:2px solid #e2e2e2;box-sizing:border-box;position:relative}
  .handle{position:absolute;left:792px;top:0;width:84px;height:6px;background:#82c46c;text-align:center;line-height:6px}
  .handle svg{display:block;margin:0 auto}
  .bottabs{flex:none;height:17px;display:flex;overflow:hidden}
  .btab{box-sizing:border-box;border:1px solid #b9e3a0;border-left:0;border-bottom:0;text-align:center;height:36px;line-height:35px;color:#222;flex:none}
  .b0{width:92px}.b1{width:80px}.b2{width:79px}.b3{width:80px}.b4{width:92px}.b5{width:92px}.b6{width:116px}.b7{width:80px}.b8{width:80px}
  .btab.on{background:#82c46c;color:#fff;font-weight:700;border-color:#82c46c}

  .dialog{position:absolute;left:930px;top:198px;width:685px;height:547px;box-sizing:border-box;border:1px solid #a9a9a9;background:#f0f0f0;display:flex;flex-direction:column}
  .dhead{height:31px;flex:none;background:#00aeef;color:#fff;display:flex;align-items:center;padding:0 12px;gap:6px}
  .dtitle{font-size:12px;flex:1}
  .q{font:bold 15px "Liberation Sans",sans-serif;margin-right:1px}
  .panel{margin:9px 9px 0 9px;height:437px;flex:none;background:#fff;padding-top:12px;box-sizing:border-box}
  .drow{display:grid;grid-template-columns:292.500px 295px 1fr;grid-template-rows:minmax(0,1fr);height:19px}
  .dh{height:26px}
  .dc{box-sizing:border-box;line-height:19px;padding-left:2px;border-right:1px solid #c8c8c8;border-bottom:1px solid #b3b3b3;color:#111;white-space:nowrap;overflow:hidden}
  .dh .dc{text-align:center;line-height:25px;border-top:1px solid #ccc;border-bottom:1px solid #ccc;background:#fff;padding:0}
  .dd .dc{background:#dfffff}
  .ctr{display:flex;justify-content:center;align-items:center;padding:0 0 1px 0 !important}
  .cb{width:12px;height:12px;box-sizing:border-box;border:1px solid #a8a8a8;background:#fff;display:inline-block;flex:none;line-height:0}
  .cb svg{margin:-1px 0 0 -1px;display:block}
  .opts{height:28px;flex:none;display:flex;align-items:center;padding-left:9px;color:#111;white-space:nowrap}
  .o1{margin:0 12px 0 6px;width:149px;font-size:12px;letter-spacing:-.4px}
  .o2{margin-left:6px;font-size:12px;letter-spacing:-.4px}
  .btns{display:flex;justify-content:flex-end;gap:6px;padding-right:8px}
  .btn{width:87px;height:27px;box-sizing:border-box;border:1px solid #aaa;text-align:center;line-height:25px;letter-spacing:1px;color:#111}
  .btn.pri{background:#00aeef;color:#fff;border-color:#ccc}
  .ink{position:absolute;left:0;top:0;pointer-events:none}
</style>
